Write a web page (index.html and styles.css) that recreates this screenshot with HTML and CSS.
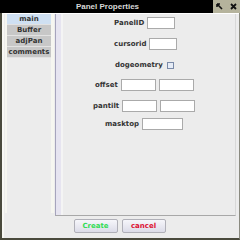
FILE: index.html
```html
<!DOCTYPE html>
<html lang="en">
  <head>
    <meta charset="UTF-8" />
    <title>Panel Properties</title>
    <link rel="stylesheet" href="styles.css">
  </head>
  <body>
    <div class="window">
      <header class="titlebar">
        <span class="title">Panel Properties</span>
        <div class="tb-buttons">
          <svg width="9" height="9" viewBox="0 0 9 9"><path d="M2 2 L7 7 M2 2 L5 2 M2 2 L2 5" stroke="#111" stroke-width="1.6" fill="none"/></svg>
          <svg width="9" height="9" viewBox="0 0 9 9"><path d="M2 2 L7 7 M7 2 L2 7" stroke="#111" stroke-width="1.8" fill="none"/></svg>
        </div>
      </header>

      <div class="content">
        <div class="main">
          <ul class="tabs">
            <li class="tab active">main</li>
            <li class="tab">Buffer</li>
            <li class="tab">adjPan</li>
            <li class="tab">comments</li>
          </ul>

          <div class="panel">
            <div class="row r-panelid">
              <label>PanelID</label>
              <input class="field w28" type="text">
            </div>
            <div class="row r-cursor">
              <label>cursorid</label>
              <input class="field w28" type="text">
            </div>
            <div class="row r-geo">
              <label>dogeometry</label>
              <span class="check"></span>
            </div>
            <div class="row r-offset">
              <label>offset</label>
              <input class="field w35" type="text">
              <input class="field w35" type="text">
            </div>
            <div class="row r-pantilt">
              <label>pantilt</label>
              <input class="field w35" type="text">
              <input class="field w35" type="text">
            </div>
            <div class="row r-mask">
              <label>masktop</label>
              <input class="field w41" type="text">
            </div>
          </div>
        </div>

        <footer class="footer">
          <button class="btn create">Create</button>
          <button class="btn cancel">cancel</button>
        </footer>
      </div>
    </div>
  </body>
</html>
```

FILE: styles.css
```css
* {
  margin: 0;
  padding: 0;
  box-sizing: border-box;
}

body {
  width: 240px;
  height: 240px;
  overflow: hidden;
  background: #ececec;
  font-family: "DejaVu Sans", Verdana, sans-serif;
}

.window {
  width: 240px;
  height: 240px;
  display: flex;
  flex-direction: column;
  border-left: 2px solid #4a4a3c;
  border-right: 1px solid #8a8a80;
  border-bottom: 2px solid #4a4a3c;
}

.titlebar {
  height: 13px;
  margin: 0 -1px 0 -2px;
  background: #000;
  display: flex;
  align-items: center;
}

.title {
  flex: 1;
  text-align: center;
  color: #d8d8d8;
  font-family: "Liberation Sans", Arial, sans-serif;
  font-size: 8px;
  font-weight: bold;
  padding-left: 2px;
}

.tb-buttons {
  width: 27px;
  height: 13px;
  background: #b5b39c;
  display: flex;
  align-items: center;
  justify-content: space-around;
}

.content {
  flex: 1;
  display: flex;
  flex-direction: column;
  border-top: 1px solid #fff;
  border-left: 2px solid #f8f8f4;
  padding: 0 3px 0 1px;
}

.main {
  flex: 1;
  display: flex;
}

.tabs {
  list-style: none;
  width: 49px;
  background: #ececec;
  border-left: 2px solid #f6f6f0;
  border-right: 3px solid #f6f6f0;
  font-size: 7px;
  font-weight: bold;
  color: #333;
  margin-bottom: 4px;
}

.tab {
  height: 11px;
  line-height: 10px;
  text-align: center;
  background: #c7c7c7;
  border-bottom: 1px solid #e2e2e2;
}

.tab.active {
  background: #cfe0f2;
}

.panel {
  flex: 1;
  margin-left: 1px;
  margin-bottom: 1px;
  border-left: 1px solid #a6a4bc;
  border-bottom: 1px solid #a8a8a8;
  border-right: 1px solid #d8d8d8;
  box-shadow: inset 5px 0 0 #e6e4f0, inset 7px 0 0 #f4f4f4;
}

.row {
  display: flex;
  align-items: center;
  gap: 3px;
  font-size: 7px;
  font-weight: bold;
  color: #333;
}

.field {
  height: 12px;
  background: #fff;
  border: 1px solid #aaa;
}

.w28 { width: 28px; }
.w35 { width: 35px; }
.w41 { width: 41px; }

.r-panelid { margin: 3px 0 0 58px; }
.r-cursor { margin: 9px 0 0 58px; }
.r-geo { margin: 11px 0 0 59px; gap: 4px; }
.r-offset { margin: 10px 0 0 39px; }
.r-pantilt { margin: 9px 0 0 37px; }
.r-mask { margin: 6px 0 0 49px; }

.check {
  width: 7px;
  height: 7px;
  border: 1px solid #7a8aa8;
  background: #e6ecf6;
}

.footer {
  height: 21px;
  display: flex;
  justify-content: center;
  gap: 4px;
  padding: 2px 2px 0 0;
}

.btn {
  width: 44px;
  height: 14px;
  font-family: "DejaVu Sans", Verdana, sans-serif;
  font-size: 7px;
  font-weight: bold;
  border: 1px solid #b0b0b8;
  border-radius: 2px;
  background: linear-gradient(#f6f6fa, #dcdce8);
}

.create { color: #33dd55; }
.cancel { color: #dd1133; }
```
